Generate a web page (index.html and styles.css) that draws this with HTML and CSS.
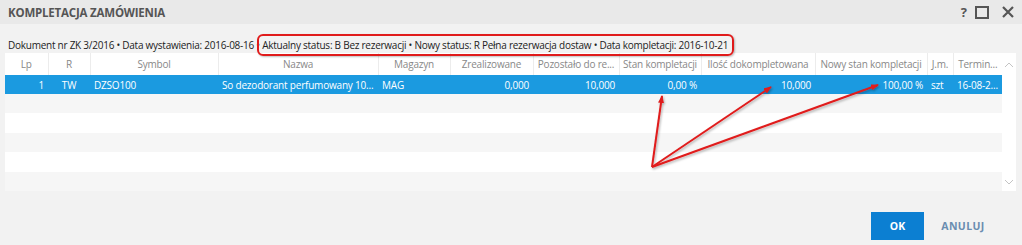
FILE: index.html
```html
<!DOCTYPE html>
<html lang="pl">
<head>
    <meta charset="UTF-8">
    <title>Kompletacja zamówienia</title>
    <link rel="stylesheet" href="styles.css">
</head>
<body>
    <div class="dialog">
        <div class="titlebar">
            <span class="title">KOMPLETACJA ZAMÓWIENIA</span>
            <div class="win-btns">
                <span class="help">?</span>
                <svg width="14" height="13" viewBox="0 0 14 13"><rect x="1" y="1" width="12" height="11" fill="none" stroke="#555" stroke-width="2"/></svg>
                <svg width="12" height="12" viewBox="0 0 12 12"><path d="M1 1 L11 11 M11 1 L1 11" stroke="#555" stroke-width="2.2"/></svg>
            </div>
        </div>

        <div class="info">Dokument nr ZK 3/2016 • Data wystawienia: 2016-08-16 • <span class="mark">Aktualny status: B Bez rezerwacji • Nowy status: R Pełna rezerwacja dostaw • Data kompletacji: 2016-10-21</span></div>

        <div class="grid">
            <table>
                <colgroup>
                    <col style="width:43px"><col style="width:42px"><col style="width:128px"><col style="width:160px">
                    <col style="width:72px"><col style="width:83px"><col style="width:86px"><col style="width:82px">
                    <col style="width:114px"><col style="width:112px"><col style="width:26px"><col style="width:49px">
                </colgroup>
                <thead>
                    <tr>
                        <th>Lp</th><th>R</th><th>Symbol</th><th>Nazwa</th><th>Magazyn</th><th>Zrealizowane</th>
                        <th>Pozostało do re...</th><th>Stan kompletacji</th><th>Ilość dokompletowana</th>
                        <th>Nowy stan kompletacji</th><th>J.m.</th><th>Termin...</th>
                    </tr>
                </thead>
                <tbody>
                    <tr class="selected">
                        <td class="num">1</td><td class="center">TW</td><td>DZSO100</td><td>So dezodorant perfumowany 10...</td>
                        <td>MAG</td><td class="num">0,000</td><td class="num">10,000</td><td class="num">0,00 %</td>
                        <td class="num">10,000</td><td class="num">100,00 %</td><td>szt</td><td>16-08-2...</td>
                    </tr>
                    <tr class="odd"><td colspan="12"></td></tr>
                    <tr><td colspan="12"></td></tr>
                    <tr class="odd"><td colspan="12"></td></tr>
                    <tr><td colspan="12"></td></tr>
                    <tr class="odd"><td colspan="12"></td></tr>
                </tbody>
            </table>
            <div class="scroll">
                <svg width="10" height="6" viewBox="0 0 10 6"><path d="M1 5 L5 1 L9 5" fill="none" stroke="#c4c4c4" stroke-width="1"/></svg>
                <svg width="10" height="6" viewBox="0 0 10 6"><path d="M1 1 L5 5 L9 1" fill="none" stroke="#c4c4c4" stroke-width="1"/></svg>
            </div>
        </div>

        <div class="footer">
            <button class="btn-ok">OK</button>
            <button class="btn-cancel">ANULUJ</button>
        </div>

        <!-- annotation arrows -->
        <svg class="arrows" width="1022" height="245" viewBox="0 0 1022 245">
            <defs>
                <marker id="head" markerWidth="8" markerHeight="6" refX="7" refY="3" orient="auto" markerUnits="userSpaceOnUse">
                    <path d="M0 0 L8 3 L0 6 Z" fill="#e01b1b"/>
                </marker>
                <filter id="sh" x="-5%" y="-5%" width="110%" height="120%">
                    <feDropShadow dx="1" dy="1.5" stdDeviation="1" flood-color="#000" flood-opacity="0.3"/>
                </filter>
            </defs>
            <g stroke="#e01b1b" stroke-width="2" fill="none" filter="url(#sh)">
                <line x1="652" y1="167" x2="662" y2="96" marker-end="url(#head)"/>
                <line x1="652" y1="167" x2="771" y2="87" marker-end="url(#head)"/>
                <line x1="652" y1="167" x2="878" y2="85" marker-end="url(#head)"/>
            </g>
        </svg>
    </div>
</body>
</html>
```

FILE: styles.css
```css
body {
    margin: 0;
    font-family: "Open Sans", "Noto Sans", sans-serif;
    background-color: #f2f2f2;
}
.dialog {
    position: relative;
    width: 1022px;
    height: 245px;
    background: #f2f2f2;
    overflow: hidden;
}
.titlebar {
    height: 24px;
    background: #e9e9e9;
    display: flex;
    align-items: center;
    justify-content: space-between;
    padding: 0 8px;
}
.title {
    font-size: 11.5px;
    font-weight: bold;
    letter-spacing: -0.2px;
    color: #555;
}
.win-btns {
    display: flex;
    align-items: center;
    gap: 13px;
}
.help {
    margin-right: -5px;
    font-size: 13px;
    font-weight: bold;
    color: #555;
}
.info {
    height: 29px;
    box-sizing: border-box;
    padding: 14px 8px 0;
    font-size: 10px;
    letter-spacing: -0.25px;
    line-height: 15px;
    color: #222;
    white-space: nowrap;
}
.mark {
    position: relative;
}
.mark::before {
    content: "";
    position: absolute;
    left: -5px;
    right: -6px;
    top: -4px;
    bottom: -4px;
    border: 2px solid #e01b1b;
    border-radius: 6px;
    box-shadow: 1px 1px 2px rgba(0, 0, 0, 0.25);
}
.grid {
    display: flex;
    margin: 0 6px 0 5px;
    height: 138px;
    background: #fff;
}
table {
    table-layout: fixed;
    border-collapse: collapse;
    width: 997px;
    font-size: 10px;
    letter-spacing: -0.2px;
}
th {
    height: 22px;
    padding: 0 3px;
    font-weight: normal;
    color: #888;
    border-left: 1px solid #ececec;
    white-space: nowrap;
    overflow: hidden;
}
th:first-child {
    border-left: none;
}
td {
    height: 19.4px;
    padding: 0 4px;
    white-space: nowrap;
    overflow: hidden;
}
tr.selected td {
    height: 19px;
    background: #1b9ae0;
    color: #fff;
}
tr.odd td {
    background: #f6f6f6;
}
.num {
    text-align: right;
}
.center {
    text-align: center;
}
.scroll {
    width: 14px;
    display: flex;
    flex-direction: column;
    justify-content: space-between;
    align-items: center;
    padding: 9px 0 6px;
}
.footer {
    display: flex;
    justify-content: flex-end;
    align-items: flex-start;
    padding: 21px 32px 0 0;
    gap: 12px;
}
.btn-ok, .btn-cancel {
    height: 28px;
    border: none;
    font-family: inherit;
    font-size: 10.5px;
    font-weight: bold;
}
.btn-ok {
    width: 53px;
    background: #0c7fd2;
    color: #fff;
}
.btn-cancel {
    width: 54px;
    padding: 0;
    letter-spacing: 0.4px;
    background: transparent;
    color: #6a8db0;
}
.arrows {
    position: absolute;
    left: 0;
    top: 0;
    pointer-events: none;
}
```
